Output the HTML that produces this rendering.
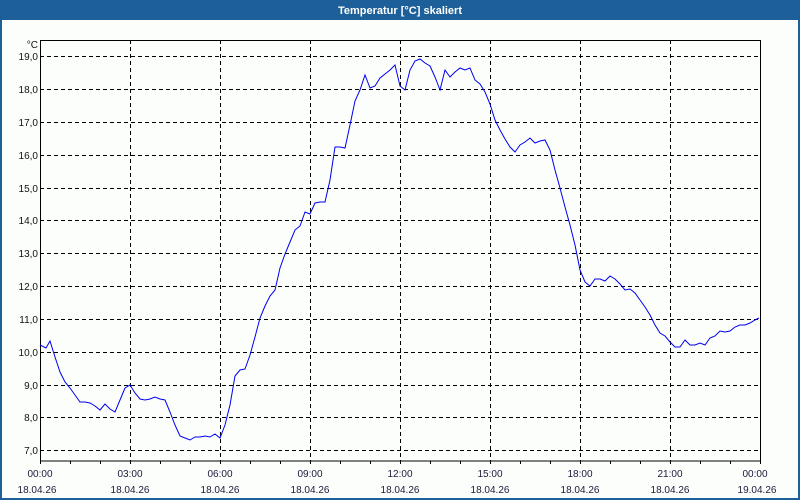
<!DOCTYPE html>
<html><head><meta charset="utf-8"><style>
body{margin:0;width:800px;height:500px;overflow:hidden;background:#fcfefc;font-family:"Liberation Sans",sans-serif}
</style></head><body>
<svg width="800" height="500" xmlns="http://www.w3.org/2000/svg" style="display:block">
<rect x="0" y="0" width="800" height="500" fill="#fcfefc"/>
<rect x="0" y="0" width="800" height="20" fill="#1d5f98"/>
<rect x="0" y="0" width="2" height="500" fill="#1d5f98"/>
<rect x="798" y="0" width="2" height="500" fill="#1d5f98"/>
<rect x="0" y="498" width="800" height="2" fill="#1d5f98"/>
<text x="400" y="14" fill="#fff" font-size="11" font-weight="bold" text-anchor="middle">Temperatur [°C] skaliert</text>
<g stroke="#000" stroke-width="1" stroke-dasharray="4,3" fill="none" shape-rendering="crispEdges">
<path d="M40 56.5H760M40 89.5H760M40 122.5H760M40 155.5H760M40 188.5H760M40 220.5H760M40 253.5H760M40 286.5H760M40 319.5H760M40 352.5H760M40 385.5H760M40 417.5H760M40 450.5H760"/>
<path d="M130.5 40V461M220.5 40V461M310.5 40V461M400.5 40V461M490.5 40V461M580.5 40V461M670.5 40V461"/>
</g>
<rect x="40.5" y="40.5" width="720" height="420.5" fill="none" stroke="#000" shape-rendering="crispEdges"/>
<g stroke="#000" shape-rendering="crispEdges">
<path d="M40.5 461V464M70.5 461V464M100.5 461V464M130.5 461V464M160.5 461V464M190.5 461V464M220.5 461V464M250.5 461V464M280.5 461V464M310.5 461V464M340.5 461V464M370.5 461V464M400.5 461V464M430.5 461V464M460.5 461V464M490.5 461V464M520.5 461V464M550.5 461V464M580.5 461V464M610.5 461V464M640.5 461V464M670.5 461V464M700.5 461V464M730.5 461V464M760.5 461V464"/>
</g>
<polyline fill="none" stroke="#0000ee" stroke-width="1" points="40,345 46,348 50,341 55,357 60,372 65,382 70,388 75,395 80,402 85,402 90,403 95,406 100,410 105,404 110,409 115,412 120,400 125,388 130,385 135,393 140,399 145,400 150,399 155,397 160,399 165,400 170,412 175,425 180,436 185,438 190,440 195,437 200,437 205,436 210,437 215,434 220,438 225,425 230,405 235,376 240,370 245,369 250,355 255,337 260,318 265,306 270,296 275,290 280,268 285,254 290,242 295,230 300,226 305,212 310,214 315,203 320,202 325,202 330,180 335,147 340,147 345,148 350,125 355,101 360,90 365,75 370,88 375,86 380,78 385,74 390,70 395,65 400,86 405,90 410,70 415,61 420,59 425,63 430,66 435,77 440,90 445,70 450,77 455,72 460,68 465,70 470,68 475,80 480,84 485,92 490,104 495,120 500,130 505,139 510,147 515,152 520,145 525,142 530,138 535,143 540,141 545,140 550,150 555,170 560,188 565,207 570,225 575,245 580,270 585,282 590,286 595,279 600,279 605,281 610,276 615,279 620,284 625,290 630,289 635,293 640,300 645,307 650,315 655,325 660,333 665,336 670,342 675,347 680,347 685,340 690,345 695,345 700,343 705,345 710,338 715,336 720,331 725,332 730,331 735,327 740,325 745,325 750,323 755,320 759,318"/>
<g font-size="10" fill="#111" text-anchor="end">
<text x="38" y="48">°C</text>
<text x="38" y="60">19,0</text><text x="38" y="93">18,0</text><text x="38" y="126">17,0</text><text x="38" y="159">16,0</text><text x="38" y="192">15,0</text><text x="38" y="224">14,0</text><text x="38" y="257">13,0</text><text x="38" y="290">12,0</text><text x="38" y="323">11,0</text><text x="38" y="356">10,0</text><text x="38" y="389">9,0</text><text x="38" y="421">8,0</text><text x="38" y="454">7,0</text>
</g>
<g font-size="10" fill="#1a1a3a" text-anchor="middle">
<text x="40" y="477">00:00</text><text x="130" y="477">03:00</text><text x="220" y="477">06:00</text><text x="310" y="477">09:00</text><text x="400" y="477">12:00</text><text x="490" y="477">15:00</text><text x="580" y="477">18:00</text><text x="670" y="477">21:00</text><text x="755" y="477">00:00</text>
<text x="37" y="493">18.04.26</text><text x="130" y="493">18.04.26</text><text x="220" y="493">18.04.26</text><text x="310" y="493">18.04.26</text><text x="400" y="493">18.04.26</text><text x="490" y="493">18.04.26</text><text x="580" y="493">18.04.26</text><text x="670" y="493">18.04.26</text><text x="757" y="493">19.04.26</text>
</g>
</svg>
</body></html>
